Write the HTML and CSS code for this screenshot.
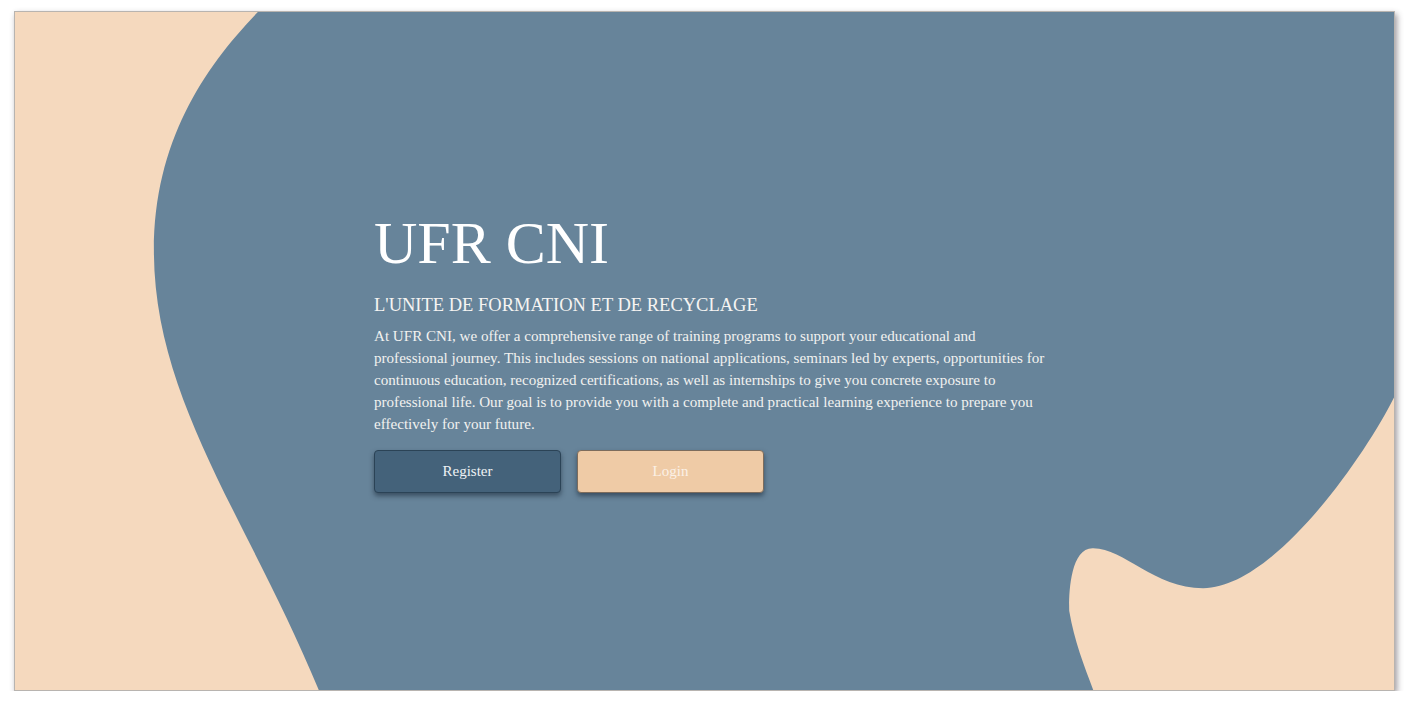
FILE: index.html
```html
<!DOCTYPE html>
<html lang="en">
<head>
<meta charset="utf-8">
<title>UFR CNI</title>
<link rel="stylesheet" href="styles.css">
</head>
<body>
<div class="page">
  <section class="card">
    <svg class="blob" viewBox="0 0 1380 679" preserveAspectRatio="none" aria-hidden="true">
      <path d="M243,0 H1380 V386 C1350,446 1259,577 1189,577 C1140,577 1110,537 1079,537 C1052,536 1055,600 1055,600 C1060,630 1070,655 1079,679 L304,679 C234,509 139,389 139,239 C139,129 190,55 243,0 Z" fill="#67849a"/>
    </svg>
    <div class="content">
      <h1 class="title">UFR CNI</h1>
      <h2 class="subtitle">L'UNITE DE FORMATION ET DE RECYCLAGE</h2>
      <p class="intro">At UFR CNI, we offer a comprehensive range of training programs to support your educational and professional journey. This includes sessions on national applications, seminars led by experts, opportunities for continuous education, recognized certifications, as well as internships to give you concrete exposure to professional life. Our goal is to provide you with a complete and practical learning experience to prepare you effectively for your future.</p>
      <div class="actions">
        <button class="btn btn-register" type="button">Register</button>
        <button class="btn btn-login" type="button">Login</button>
      </div>
    </div>
  </section>
</div>
</body>
</html>
```
FILE: styles.css
```css
* { box-sizing: border-box; }
html, body { margin: 0; padding: 0; background: #ffffff; }
body { font-family: "Liberation Serif", "Times New Roman", serif; }

.page {
  padding: 11px 0 0 14px;
}

.card {
  width: 1381px;
  height: 680px;
  display: grid;
  background: #f5d9be;
  border: 1px solid #b8b4b0;
  box-shadow: 2px 3px 6px rgba(40, 30, 40, 0.45);
  overflow: hidden;
}

.blob, .content {
  grid-area: 1 / 1;
}

.blob {
  width: 100%;
  height: 100%;
  display: block;
}

.content {
  padding: 197px 0 0 359px;
  color: #ffffff;
  display: flex;
  flex-direction: column;
  align-items: flex-start;
}

.title {
  margin: 0;
  font-size: 60px;
  font-weight: normal;
  line-height: 69px;
}

.subtitle {
  margin: 17px 0 0;
  font-size: 18.5px;
  font-weight: normal;
  line-height: 21px;
  color: #f6f4f2;
}

.intro {
  margin: 9px 0 0;
  width: 672px;
  font-size: 15.1px;
  line-height: 22px;
  color: #f2f2f0;
}

.actions {
  display: flex;
  gap: 16px;
  margin-top: 15px;
}

.btn {
  width: 187px;
  height: 43px;
  border-radius: 4px;
  font-family: "Liberation Serif", "Times New Roman", serif;
  font-size: 15px;
  cursor: pointer;
  box-shadow: 0 3px 5px rgba(20, 35, 50, 0.55);
}

.btn-register {
  background: #44627a;
  border: 1px solid #2b4356;
  color: #eef2f5;
}

.btn-login {
  background: #efcba6;
  border: 1px solid #7d6c5c;
  color: #fbf1e6;
}
```
